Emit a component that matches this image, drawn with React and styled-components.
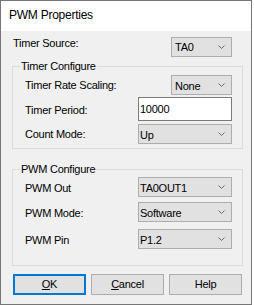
import React from "react";
import styled, { createGlobalStyle } from "styled-components";

const Global = createGlobalStyle`
  html, body { margin: 0; padding: 0; background: #ffffff; }
  body { font-family: "Liberation Sans", Arial, sans-serif; }
`;

const Window = styled.div`
  width: 252px;
  height: 305px;
  box-sizing: border-box;
  border: 1px solid #767676;
  background: #f0f0f0;
  display: flex;
  flex-direction: column;
`;

const TitleBar = styled.div`
  height: 30px;
  flex: none;
  box-sizing: border-box;
  background: #ffffff;
  padding: 6px 0 0 8px;
  font-size: 12px;
  line-height: 16px;
  letter-spacing: -0.25px;
  color: #000;
`;

const Body = styled.div`
  display: flex;
  flex-direction: column;
  padding: 0 8px 0 11px;
  font-size: 11px;
  line-height: 13px;
  letter-spacing: -0.25px;
  color: #000;
`;

const Row = styled.div`
  display: flex;
  align-items: flex-start;
  margin-top: ${(p) => p.$mt || 0}px;
  padding: 0 ${(p) => p.$pr ?? 10}px 0 ${(p) => p.$pl ?? 12}px;
`;

const Label = styled.span`
  margin-top: ${(p) => p.$mt || 0}px;
  white-space: nowrap;
`;

const Combo = styled.div`
  margin-left: auto;
  width: ${(p) => p.$w}px;
  height: 20px;
  box-sizing: border-box;
  border: 1px solid #adadad;
  background: #e1e1e1;
  display: flex;
  align-items: center;
  justify-content: space-between;
  padding: 0 6px 0 ${(p) => p.$pl ?? 1}px;
`;

const ComboText = styled.span`
  align-self: flex-start;
  padding-top: ${(p) => p.$pt ?? 4}px;
  white-space: nowrap;
`;

const ChevronSvg = styled.svg`
  flex: none;
  display: block;
`;

const Chevron = () => (
  <ChevronSvg width="7" height="4" viewBox="0 0 7 4">
    <polyline
      points="0.5,0.5 3.5,3.5 6.5,0.5"
      fill="none"
      stroke="#6a6a6a"
      strokeWidth="1"
    />
  </ChevronSvg>
);

const TextBox = styled.input`
  margin-left: auto;
  width: 94px;
  height: 24px;
  box-sizing: border-box;
  border: 1px solid #7a7a7a;
  background: #ffffff;
  padding: 0 1px;
  font: inherit;
  letter-spacing: inherit;
  color: #000;
  outline: none;
  border-radius: 0;
`;

const Group = styled.fieldset`
  margin: ${(p) => p.$mt}px 0 0 0;
  padding: ${(p) => p.$pt}px 0 ${(p) => p.$pb}px 0;
  border: 1px solid #dcdcdc;
  min-inline-size: 0;
`;

const Legend = styled.legend`
  margin-left: 7px;
  padding: 0 1px;
  line-height: 13px;
`;

const ButtonBar = styled.div`
  display: flex;
  gap: 5px;
  margin-top: 8px;
  padding-left: 1px;
`;

const Button = styled.button`
  width: 73px;
  height: 21px;
  box-sizing: border-box;
  margin: 0;
  padding: 0;
  border-radius: 0;
  background: #e1e1e1;
  border: ${(p) => (p.$default ? "2px solid #0078d7" : "1px solid #adadad")};
  font: inherit;
  letter-spacing: inherit;
  line-height: 13px;
  color: #000;
`;

const Select = ({ value, width, pl }) => (
  <Combo $w={width} $pl={pl}>
    <ComboText>{value}</ComboText>
    <Chevron />
  </Combo>
);

export default function App() {
  return (
    <>
      <Global />
      <Window>
        <TitleBar>PWM Properties</TitleBar>
        <Body>
          <Row $mt={6} $pl={1} $pr={11}>
            <Label>Timer Source:</Label>
            <Combo $w={61} $pl={3}>
              <ComboText $pt={3}>TA0</ComboText>
              <Chevron />
            </Combo>
          </Row>

          <Group $mt={3} $pt={2} $pb={4}>
            <Legend>Timer Configure</Legend>
            <Row>
              <Label $mt={4}>Timer Rate Scaling:</Label>
              <Select value="None" width={61} pl={3} />
            </Row>
            <Row $mt={2}>
              <Label $mt={7}>Timer Period:</Label>
              <TextBox defaultValue="10000" />
            </Row>
            <Row $mt={3}>
              <Label $mt={4}>Count Mode:</Label>
              <Select value="Up" width={94} />
            </Row>
          </Group>

          <Group $mt={14} $pt={1} $pb={16}>
            <Legend>PWM Configure</Legend>
            <Row>
              <Label $mt={5}>PWM Out</Label>
              <Select value="TA0OUT1" width={94} />
            </Row>
            <Row $mt={5}>
              <Label $mt={5}>PWM Mode:</Label>
              <Select value="Software" width={94} />
            </Row>
            <Row $mt={7}>
              <Label $mt={5}>PWM Pin</Label>
              <Select value="P1.2" width={94} />
            </Row>
          </Group>

          <ButtonBar>
            <Button $default>
              <u>O</u>K
            </Button>
            <Button>
              <u>C</u>ancel
            </Button>
            <Button>Help</Button>
          </ButtonBar>
        </Body>
      </Window>
    </>
  );
}
